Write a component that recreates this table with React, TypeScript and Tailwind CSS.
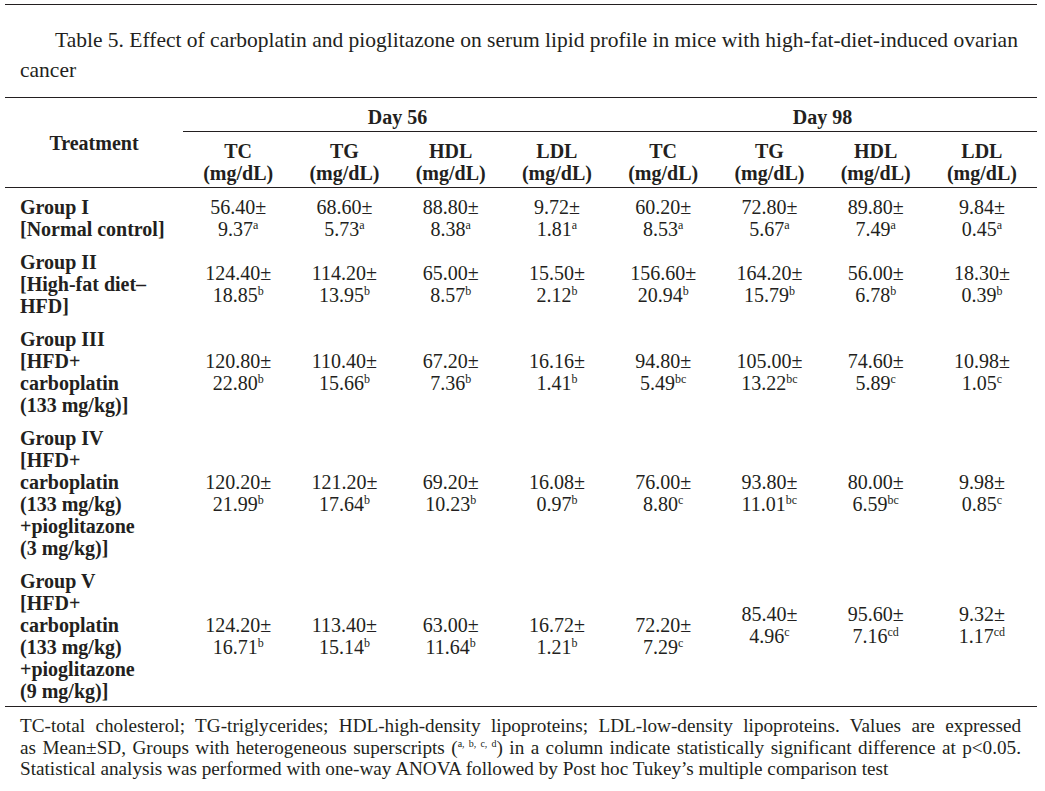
type Cell = { mean: string; sd: string; sup: string; lift?: boolean };
type Row = { label: string[]; cells: Cell[] };

const c = (mean: string, sd: string, sup: string, lift = false): Cell => ({ mean, sd, sup, lift });

const ROWS: Row[] = [
  {
    label: ["Group I", "[Normal control]"],
    cells: [
      c("56.40", "9.37", "a"),
      c("68.60", "5.73", "a"),
      c("88.80", "8.38", "a"),
      c("9.72", "1.81", "a"),
      c("60.20", "8.53", "a"),
      c("72.80", "5.67", "a"),
      c("89.80", "7.49", "a"),
      c("9.84", "0.45", "a"),
    ],
  },
  {
    label: ["Group II", "[High-fat diet–", "HFD]"],
    cells: [
      c("124.40", "18.85", "b"),
      c("114.20", "13.95", "b"),
      c("65.00", "8.57", "b"),
      c("15.50", "2.12", "b"),
      c("156.60", "20.94", "b"),
      c("164.20", "15.79", "b"),
      c("56.00", "6.78", "b"),
      c("18.30", "0.39", "b"),
    ],
  },
  {
    label: ["Group III", "[HFD+", "carboplatin", "(133 mg/kg)]"],
    cells: [
      c("120.80", "22.80", "b"),
      c("110.40", "15.66", "b"),
      c("67.20", "7.36", "b"),
      c("16.16", "1.41", "b"),
      c("94.80", "5.49", "bc"),
      c("105.00", "13.22", "bc"),
      c("74.60", "5.89", "c"),
      c("10.98", "1.05", "c"),
    ],
  },
  {
    label: ["Group IV", "[HFD+", "carboplatin", "(133 mg/kg)", "+pioglitazone", "(3 mg/kg)]"],
    cells: [
      c("120.20", "21.99", "b"),
      c("121.20", "17.64", "b"),
      c("69.20", "10.23", "b"),
      c("16.08", "0.97", "b"),
      c("76.00", "8.80", "c"),
      c("93.80", "11.01", "bc"),
      c("80.00", "6.59", "bc"),
      c("9.98", "0.85", "c"),
    ],
  },
  {
    label: ["Group V", "[HFD+", "carboplatin", "(133 mg/kg)", "+pioglitazone", "(9 mg/kg)]"],
    cells: [
      c("124.20", "16.71", "b"),
      c("113.40", "15.14", "b"),
      c("63.00", "11.64", "b"),
      c("16.72", "1.21", "b"),
      c("72.20", "7.29", "c"),
      c("85.40", "4.96", "c", true),
      c("95.60", "7.16", "cd", true),
      c("9.32", "1.17", "cd", true),
    ],
  },
];

const PARAMS = ["TC", "TG", "HDL", "LDL", "TC", "TG", "HDL", "LDL"];

function ValueCell({ cell }: { cell: Cell }) {
  return (
    <div className={`pl-1 text-center ${cell.lift ? "pb-[22px]" : ""}`}>
      <div>{cell.mean}±</div>
      <div>
        {cell.sd}
        <sup className="relative top-[-7px] text-[12px]">{cell.sup}</sup>
      </div>
    </div>
  );
}

export default function App() {
  return (
    <div
      className="min-h-screen bg-white pt-[4px] text-[#231f20]"
      style={{ fontFamily: '"Liberation Serif", "Times New Roman", serif' }}
    >
      <div className="ml-[5px] w-[1032px]">
        {/* caption */}
        <div className="border-t border-[#231f20] px-[15px] pt-[20px] pb-[12px] text-[21.5px] leading-[30px]">
          <div className="pl-[35px] whitespace-nowrap">
            Table 5. Effect of carboplatin and pioglitazone on serum lipid profile in mice with high-fat-diet-induced ovarian
          </div>
          <div>cancer</div>
        </div>

        {/* header */}
        <div className="grid grid-cols-[178px_1fr] border-y border-[#231f20] text-[20px] leading-[22px] font-bold">
          <div className="flex items-center justify-center">Treatment</div>
          <div>
            <div className="grid grid-cols-[425px_425px] border-b border-[#231f20] pt-[8px] pb-[3px]">
              <div className="pl-1 text-center">Day 56</div>
              <div className="pl-1 text-center">Day 98</div>
            </div>
            <div className="grid grid-cols-[repeat(8,106.25px)] pt-[8px] pb-[3px]">
              {PARAMS.map((p, i) => (
                <div key={i} className="pl-1 text-center">
                  <div>{p}</div>
                  <div>(mg/dL)</div>
                </div>
              ))}
            </div>
          </div>
        </div>

        {/* body */}
        <div className="border-b border-[#231f20] pb-[1px] text-[20px] leading-[22px]">
          {ROWS.map((row, i) => (
            <div key={i} className="grid grid-cols-[178px_repeat(8,106.25px)] items-center pt-[8px] pb-[3px]">
              <div className="pl-[15px] font-bold">
                {row.label.map((l, j) => (
                  <div key={j}>{l}</div>
                ))}
              </div>
              {row.cells.map((cell, j) => (
                <ValueCell key={j} cell={cell} />
              ))}
            </div>
          ))}
        </div>

        {/* notes */}
        <div className="pl-[15px] pr-[16px] pt-[8px] text-[19.2px] leading-[21.5px]">
          <div className="whitespace-nowrap text-justify [text-align-last:justify]">
            TC-total cholesterol; TG-triglycerides; HDL-high-density lipoproteins; LDL-low-density lipoproteins. Values are
            expressed
          </div>
          <div className="whitespace-nowrap text-justify [text-align-last:justify]">
            as Mean±SD, Groups with heterogeneous superscripts (
            <sup className="relative top-[-7px] text-[10px]">a, b, c, d</sup>) in a column indicate statistically
            significant difference at p&lt;0.05.
          </div>
          <div className="whitespace-nowrap">
            Statistical analysis was performed with one-way ANOVA followed by Post hoc Tukey’s multiple comparison test
          </div>
        </div>
      </div>
    </div>
  );
}
